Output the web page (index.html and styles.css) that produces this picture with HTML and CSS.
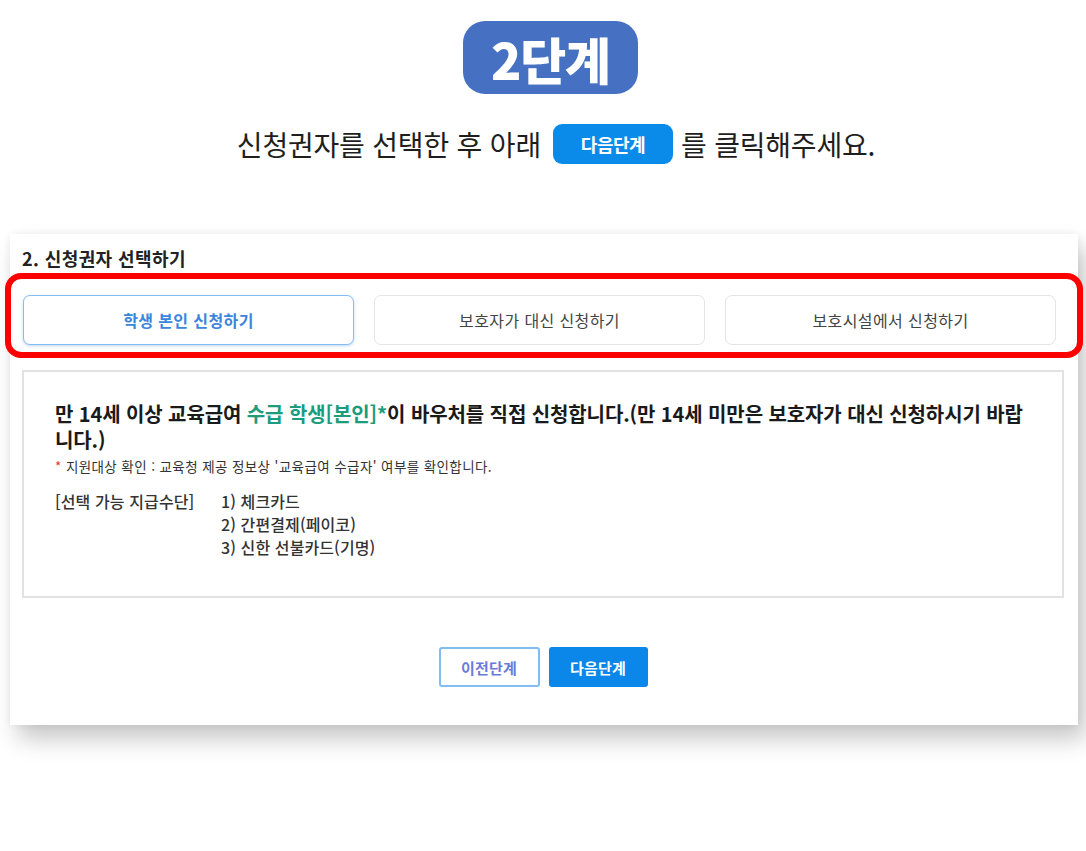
FILE: index.html
```html
<!DOCTYPE html>
<html lang="ko">
<head>
<meta charset="utf-8">
<link rel="stylesheet" href="styles.css">
</head>
<body>
<header class="intro">
  <div class="step-badge">2단계</div>
  <p class="instruction"><span>신청권자를 선택한 후 아래</span><span class="inline-btn">다음단계</span><span>를 클릭해주세요.</span></p>
</header>
<section class="panel">
  <h2 class="panel-title">2. 신청권자 선택하기</h2>
  <div class="choice-row">
    <button class="choice selected">학생 본인 신청하기</button>
    <button class="choice">보호자가 대신 신청하기</button>
    <button class="choice">보호시설에서 신청하기</button>
  </div>
  <div class="highlight"></div>
  <div class="info-box">
    <p class="info-head">만 14세 이상 교육급여 <span class="green">수급 학생[본인]*</span>이 바우처를 직접 신청합니다.(만 14세 미만은 보호자가 대신 신청하시기 바랍니다.)</p>
    <p class="info-note"><span class="red">*</span> 지원대상 확인 : 교육청 제공 정보상 '교육급여 수급자' 여부를 확인합니다.</p>
    <div class="pay">
      <div class="pay-label">[선택 가능 지급수단]</div>
      <ul class="pay-list">
        <li>1) 체크카드</li>
        <li>2) 간편결제(페이코)</li>
        <li>3) 신한 선불카드(기명)</li>
      </ul>
    </div>
  </div>
  <div class="nav-row">
    <button class="nav prev">이전단계</button>
    <button class="nav next">다음단계</button>
  </div>
</section>
</body>
</html>
```
FILE: styles.css
```css
html, body {
  margin: 0;
  padding: 0;
  background: #ffffff;
}
body {
  font-family: "Noto Sans CJK KR", "Noto Sans", sans-serif;
  color: #222;
  width: 1086px;
  height: 851px;
  overflow: hidden;
}
.intro {
  display: flex;
  flex-direction: column;
  align-items: center;
  padding-top: 21px;
}
.step-badge {
  width: 175px;
  height: 73px;
  margin-left: 15px;
  box-sizing: border-box;
  background: #4671c2;
  border-radius: 22px;
  color: #fff;
  font-weight: 900;
  font-size: 50px;
  letter-spacing: -1.2px;
  display: flex;
  align-items: center;
  justify-content: center;
  line-height: 1;
}
.instruction {
  margin: 30px 0 0 26px;
  font-size: 28px;
  letter-spacing: -0.2px;
  color: #1e1e1e;
  display: flex;
  align-items: center;
  height: 40px;
  white-space: pre;
}
.inline-btn {
  display: inline-flex;
  align-items: center;
  justify-content: center;
  width: 120px;
  height: 40px;
  margin: 0 8px 0 12px;
  background: #0b8be9;
  color: #fff;
  border-radius: 9px;
  font-size: 18px;
  font-weight: 700;
  letter-spacing: -0.5px;
}
.panel {
  position: relative;
  margin: 70px 8px 0 10px;
  height: 491px;
  box-sizing: border-box;
  padding: 11px 14px 0 12px;
  background: #fff;
  box-shadow: 0 0 8px rgba(0,0,0,0.06), 8px 14px 22px rgba(0,0,0,0.22);
}
.panel-title {
  margin: 0;
  font-size: 18px;
  font-weight: 700;
  color: #222;
  line-height: 26px;
  letter-spacing: 0.4px;
}
.choice-row {
  display: flex;
  gap: 20px;
  margin: 24px 8px 0 1px;
}
.choice {
  flex: 1;
  height: 50px;
  background: #fff;
  border: 1.5px solid #e4e4e4;
  border-radius: 7px;
  font-family: inherit;
  font-size: 16px;
  color: #444;
  letter-spacing: 0.4px;
}
.choice.selected {
  border-color: #86bdf0;
  color: #3a86dc;
  font-weight: 700;
  box-shadow: 0 1px 3px rgba(70,140,220,0.35);
}
.highlight {
  position: absolute;
  left: -5px;
  right: -5px;
  top: 39px;
  height: 85px;
  box-sizing: border-box;
  border: 6px solid #ff0000;
  border-radius: 16px;
  pointer-events: none;
}
.info-box {
  margin-top: 25px;
  height: 228px;
  box-sizing: border-box;
  border: 2px solid #e2e2e2;
  padding: 29px 26px 0 31px;
}
.info-head {
  margin: 0;
  font-size: 20px;
  font-weight: 700;
  line-height: 26px;
  color: #1a1a1a;
  letter-spacing: -0.1px;
}
.green { color: #1b9c7c; }
.red { color: #e53935; }
.info-note {
  margin: 4px 0 0 0;
  font-size: 13.5px;
  line-height: 18px;
  color: #333;
  letter-spacing: 0.4px;
}
.pay {
  display: flex;
  margin-top: 15px;
  font-size: 16px;
  font-weight: 500;
  line-height: 23px;
  color: #333;
  letter-spacing: 0.1px;
}
.pay-label {
  width: 166px;
}
.pay-list {
  list-style: none;
  margin: 0;
  padding: 0;
}
.nav-row {
  display: flex;
  justify-content: center;
  gap: 9px;
  margin-top: 49px;
}
.nav {
  width: 101px;
  height: 40px;
  border-radius: 3px;
  font-family: inherit;
  font-size: 15px;
  font-weight: 700;
  letter-spacing: 0.2px;
}
.nav.prev {
  background: #fff;
  border: 2px solid #82bdf2;
  color: #6a7bd6;
}
.nav.next {
  width: 99px;
  background: #0a87e8;
  border: none;
  color: #fff;
}
```
